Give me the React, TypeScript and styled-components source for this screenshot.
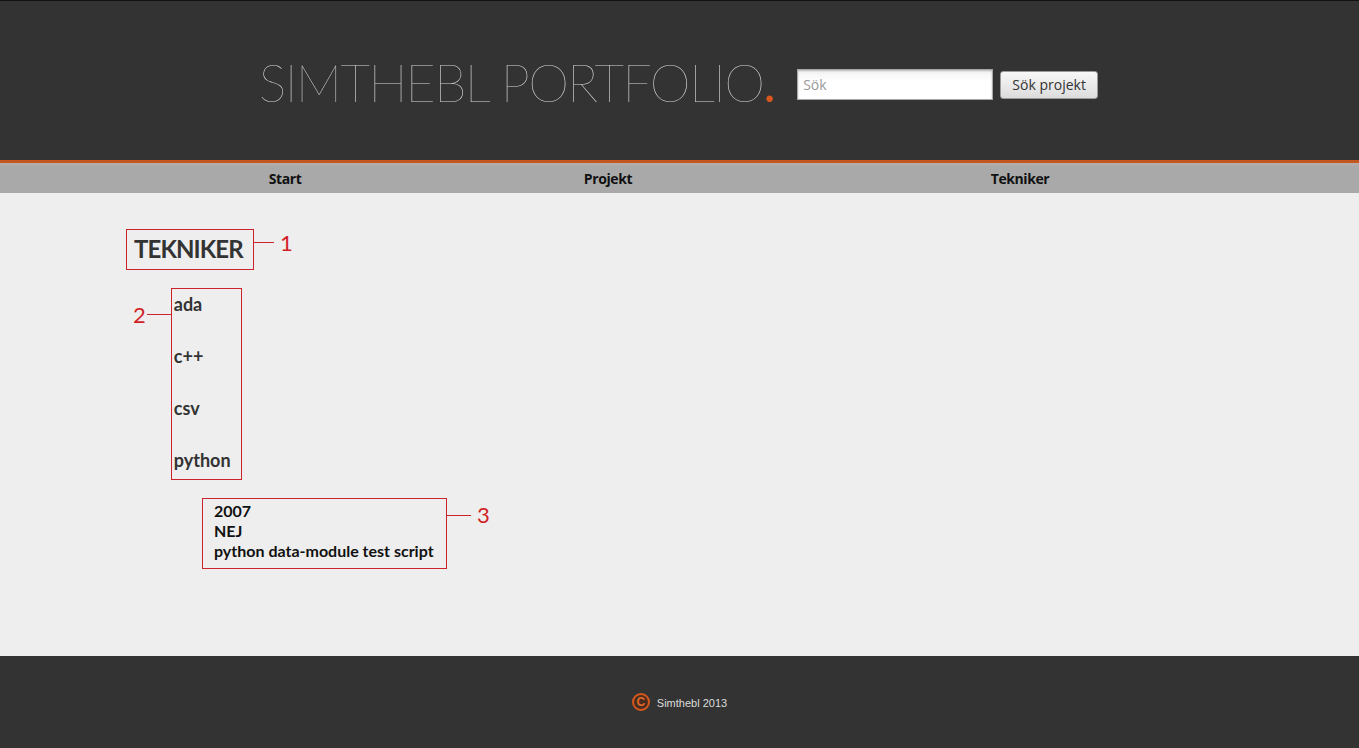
import React from "react";
import styled, { createGlobalStyle } from "styled-components";

const Global = createGlobalStyle`
  html, body { margin: 0; padding: 0; background: #eeeeee; }
  body { font-family: Lato, "Open Sans", sans-serif; }
`;

const Header = styled.header`
  height: 159px;
  background: #333333;
  border-top: 1px solid #111111;
  border-bottom: 3px solid #c4561f;
  display: flex;
  align-items: center;
  justify-content: center;
`;

const Brand = styled.div`
  display: flex;
  align-items: center;
  gap: 23px;
  margin-top: 10px;
  margin-left: -2px;
`;

const Title = styled.h1`
  margin: -8px 0 0 0;
  font-family: Lato, sans-serif;
  font-weight: 100;
  font-size: 52px;
  line-height: 60px;
  color: #d6d6d6;
  letter-spacing: -1.65px;
  white-space: nowrap;
`;

const Dot = styled.span`
  color: #d8571c;
  font-weight: 400;
`;

const SearchForm = styled.form`
  display: flex;
  align-items: center;
  gap: 7px;
  margin-top: -2px;
`;

const SearchInput = styled.input`
  box-sizing: border-box;
  width: 196px;
  height: 31px;
  border: 1px solid #a8a8a8;
  box-shadow: inset 0 1px 2px rgba(0, 0, 0, 0.25);
  background: linear-gradient(#f2f2f2, #ffffff 40%);
  padding: 0 5px;
  font-family: "Open Sans", sans-serif;
  font-size: 14px;
  color: #333;
  outline: none;
  &::placeholder { color: #9a9a9a; }
`;

const SearchButton = styled.button`
  box-sizing: border-box;
  width: 98px;
  height: 28px;
  border: 1px solid #9a9a9a;
  border-radius: 3px;
  background: linear-gradient(#f8f8f8, #dcdcdc);
  font-family: "Open Sans", sans-serif;
  font-size: 14px;
  color: #333;
  padding: 0;
`;

const Nav = styled.nav`
  height: 30px;
  background: linear-gradient(#b6aeab 0px, #a9a9a9 4px, #a9a9a9 100%);
  display: grid;
  grid-template-columns: 312px 334px 490px;
  padding-left: 129px;
  align-items: center;
`;

const NavItem = styled.a`
  text-align: center;
  font-family: "Open Sans", sans-serif;
  font-weight: 700;
  font-size: 14px;
  letter-spacing: -0.4px;
  color: #111111;
  text-decoration: none;
`;

const Main = styled.main`
  height: 463px;
  box-sizing: border-box;
  padding: 36px 0 0 126px;
  display: flex;
  flex-direction: column;
  align-items: flex-start;
  gap: 18px;
`;

const Row = styled.div<{ $indent?: number }>`
  display: flex;
  align-items: flex-start;
  margin-left: ${(p) => p.$indent ?? 0}px;
`;

const Box = styled.div`
  border: 1px solid #cc2229;
  box-sizing: border-box;
`;

const HeadingBox = styled(Box)`
  width: 128px;
  height: 41px;
  padding: 0 7px;
`;

const Heading = styled.h2`
  margin: 0;
  font-family: Lato, sans-serif;
  font-weight: 700;
  font-size: 24px;
  letter-spacing: -0.9px;
  line-height: 38px;
  color: #333333;
  white-space: nowrap;
`;

const ListBox = styled(Box)`
  width: 71px;
  height: 192px;
  padding: 4px 2px 0 2px;
  display: flex;
  flex-direction: column;
  gap: 30px;
`;

const TechLink = styled.a`
  font-family: Lato, sans-serif;
  font-weight: 700;
  font-size: 18px;
  line-height: 22px;
  color: #333333;
  text-decoration: none;
`;

const InfoBox = styled(Box)`
  width: 245px;
  height: 71px;
  padding: 2px 0 0 11px;
`;

const InfoLine = styled.div`
  font-family: Lato, sans-serif;
  font-weight: 700;
  font-size: 16px;
  line-height: 20px;
  color: #111111;
  white-space: nowrap;
`;

const Connector = styled.span<{ $w: number; $top: number }>`
  display: block;
  width: ${(p) => p.$w}px;
  height: 1px;
  background: #cc2229;
  margin-top: ${(p) => p.$top}px;
`;

const Marker = styled.span<{ $top: number; $gap: number; $side: "left" | "right" }>`
  font-family: Lato, sans-serif;
  font-size: 22px;
  line-height: 22px;
  color: #d21f26;
  margin-top: ${(p) => p.$top}px;
  ${(p) => (p.$side === "right" ? `margin-left: ${p.$gap}px;` : `margin-right: ${p.$gap}px;`)}
`;

const Footer = styled.footer`
  height: 92px;
  background: #333333;
  display: flex;
  align-items: center;
  justify-content: center;
  gap: 7px;
`;

const CopyMark = styled.span`
  display: inline-flex;
  align-items: center;
  justify-content: center;
  width: 18px;
  height: 18px;
  border-radius: 50%;
  border: 2px solid #d6581d;
  box-sizing: border-box;
  background: #4a2c1e;
  color: #e06a2a;
  font-family: "Liberation Sans", Arial, sans-serif;
  font-weight: 700;
  font-size: 12px;
  line-height: 1;
`;

const FooterText = styled.span`
  font-family: "Liberation Sans", Arial, sans-serif;
  font-size: 11px;
  color: #dddddd;
  margin-top: 2px;
`;

const techs = ["ada", "c++", "csv", "python"];

export default function App() {
  return (
    <>
      <Global />
      <Header>
        <Brand>
          <Title>
            SIMTHEBL PORTFOLIO<Dot>.</Dot>
          </Title>
          <SearchForm onSubmit={(e) => e.preventDefault()}>
            <SearchInput placeholder="Sök" />
            <SearchButton type="submit">Sök projekt</SearchButton>
          </SearchForm>
        </Brand>
      </Header>
      <Nav>
        <NavItem href="#">Start</NavItem>
        <NavItem href="#">Projekt</NavItem>
        <NavItem href="#">Tekniker</NavItem>
      </Nav>
      <Main>
        <Row>
          <HeadingBox>
            <Heading>TEKNIKER</Heading>
          </HeadingBox>
          <Connector $w={20} $top={13} />
          <Marker $side="right" $gap={6} $top={3}>1</Marker>
        </Row>
        <Row $indent={7}>
          <Marker $side="left" $gap={1} $top={16}>2</Marker>
          <Connector $w={24} $top={26} />
          <ListBox>
            {techs.map((t) => (
              <TechLink key={t} href="#">{t}</TechLink>
            ))}
          </ListBox>
        </Row>
        <Row $indent={76}>
          <InfoBox>
            <InfoLine>2007</InfoLine>
            <InfoLine>NEJ</InfoLine>
            <InfoLine>python data-module test script</InfoLine>
          </InfoBox>
          <Connector $w={24} $top={17} />
          <Marker $side="right" $gap={6} $top={6}>3</Marker>
        </Row>
      </Main>
      <Footer>
        <CopyMark>C</CopyMark>
        <FooterText>Simthebl 2013</FooterText>
      </Footer>
    </>
  );
}
